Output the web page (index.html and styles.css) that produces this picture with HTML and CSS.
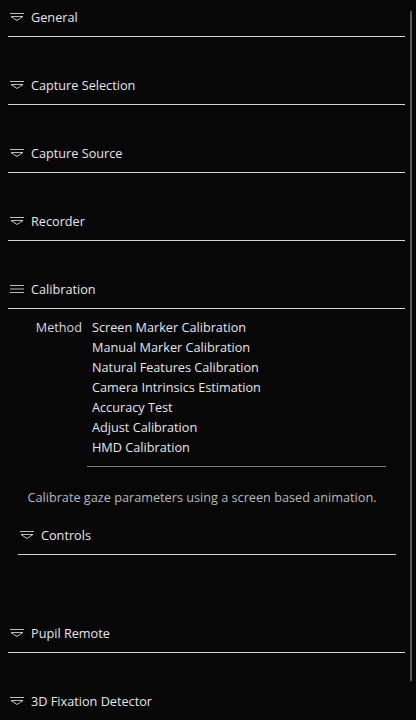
FILE: index.html
```html
<!DOCTYPE html>
<html>
<head>
<meta charset="utf-8">
<link rel="stylesheet" href="styles.css">
</head>
<body>
<div class="page">
  <div class="panel">
    <div class="section">
      <div class="header"><svg class="icon" viewBox="0 0 14 8"><path d="M0 0.5H14M1 3.5H13L7 7.5Z" fill="none" stroke="#bdbdbd" stroke-width="1"/></svg><span>General</span></div>
    </div>
    <div class="section">
      <div class="header"><svg class="icon" viewBox="0 0 14 8"><path d="M0 0.5H14M1 3.5H13L7 7.5Z" fill="none" stroke="#bdbdbd" stroke-width="1"/></svg><span>Capture Selection</span></div>
    </div>
    <div class="section">
      <div class="header"><svg class="icon" viewBox="0 0 14 8"><path d="M0 0.5H14M1 3.5H13L7 7.5Z" fill="none" stroke="#bdbdbd" stroke-width="1"/></svg><span>Capture Source</span></div>
    </div>
    <div class="section">
      <div class="header"><svg class="icon" viewBox="0 0 14 8"><path d="M0 0.5H14M1 3.5H13L7 7.5Z" fill="none" stroke="#bdbdbd" stroke-width="1"/></svg><span>Recorder</span></div>
    </div>
    <div class="section open">
      <div class="header"><svg class="icon" viewBox="0 0 14 8"><path d="M0 0.5H14M0 4H14M0 7.5H14" fill="none" stroke="#bdbdbd" stroke-width="1"/></svg><span>Calibration</span></div>
      <div class="body">
        <div class="field">
          <div class="label">Method</div>
          <ul class="options">
            <li>Screen Marker Calibration</li>
            <li>Manual Marker Calibration</li>
            <li>Natural Features Calibration</li>
            <li>Camera Intrinsics Estimation</li>
            <li>Accuracy Test</li>
            <li>Adjust Calibration</li>
            <li>HMD Calibration</li>
          </ul>
        </div>
        <div class="sep"></div>
        <p class="info">Calibrate gaze parameters using a screen based animation.</p>
        <div class="sub">
          <div class="header"><svg class="icon" viewBox="0 0 14 8"><path d="M0 0.5H14M1 3.5H13L7 7.5Z" fill="none" stroke="#bdbdbd" stroke-width="1"/></svg><span>Controls</span></div>
        </div>
      </div>
    </div>
    <div class="section">
      <div class="header"><svg class="icon" viewBox="0 0 14 8"><path d="M0 0.5H14M1 3.5H13L7 7.5Z" fill="none" stroke="#bdbdbd" stroke-width="1"/></svg><span>Pupil Remote</span></div>
    </div>
    <div class="section">
      <div class="header"><svg class="icon" viewBox="0 0 14 8"><path d="M0 0.5H14M1 3.5H13L7 7.5Z" fill="none" stroke="#bdbdbd" stroke-width="1"/></svg><span>3D Fixation Detector</span></div>
    </div>
  </div>
  <div class="scrollbar"></div>
</div>
</body>
</html>
```
FILE: styles.css
```css
html, body {
  margin: 0;
  padding: 0;
  background: #070707;
  height: 720px;
  overflow: hidden;
}
.page {
  display: flex;
  align-items: flex-start;
  font-family: "Open Sans", "DejaVu Sans", sans-serif;
  font-size: 12.7px;
  color: #e6e6e6;
}
.panel {
  width: 397px;
  margin-left: 8px;
}
.section {
  margin-bottom: 31px;
}
.header {
  display: flex;
  align-items: center;
  height: 34px;
  padding-bottom: 2px;
  border-bottom: 1px solid #d4d4d4;
}
.icon {
  width: 14px;
  height: 8px;
  margin-left: 2px;
  margin-right: 7px;
  flex: none;
}
.body {
  padding-top: 8px;
  padding-bottom: 30px;
}
.field {
  display: flex;
  line-height: 20px;
}
.label {
  width: 74px;
  text-align: right;
  padding-right: 10px;
  color: #d8d8d8;
}
.options {
  list-style: none;
  margin: 0;
  padding: 0;
}
.sep {
  margin: 9px 19px 0 79px;
  border-top: 1px solid #7a7a7a;
}
.info {
  margin: 20px 0 0;
  padding-right: 9px;
  line-height: 20px;
  text-align: center;
  color: #b8b8b8;
}
.sub {
  margin: 11px 9px 0 10px;
}
.scrollbar {
  width: 2px;
  height: 670px;
  margin-top: 11px;
  margin-left: 5px;
  background: #5a5a5a;
}
```
